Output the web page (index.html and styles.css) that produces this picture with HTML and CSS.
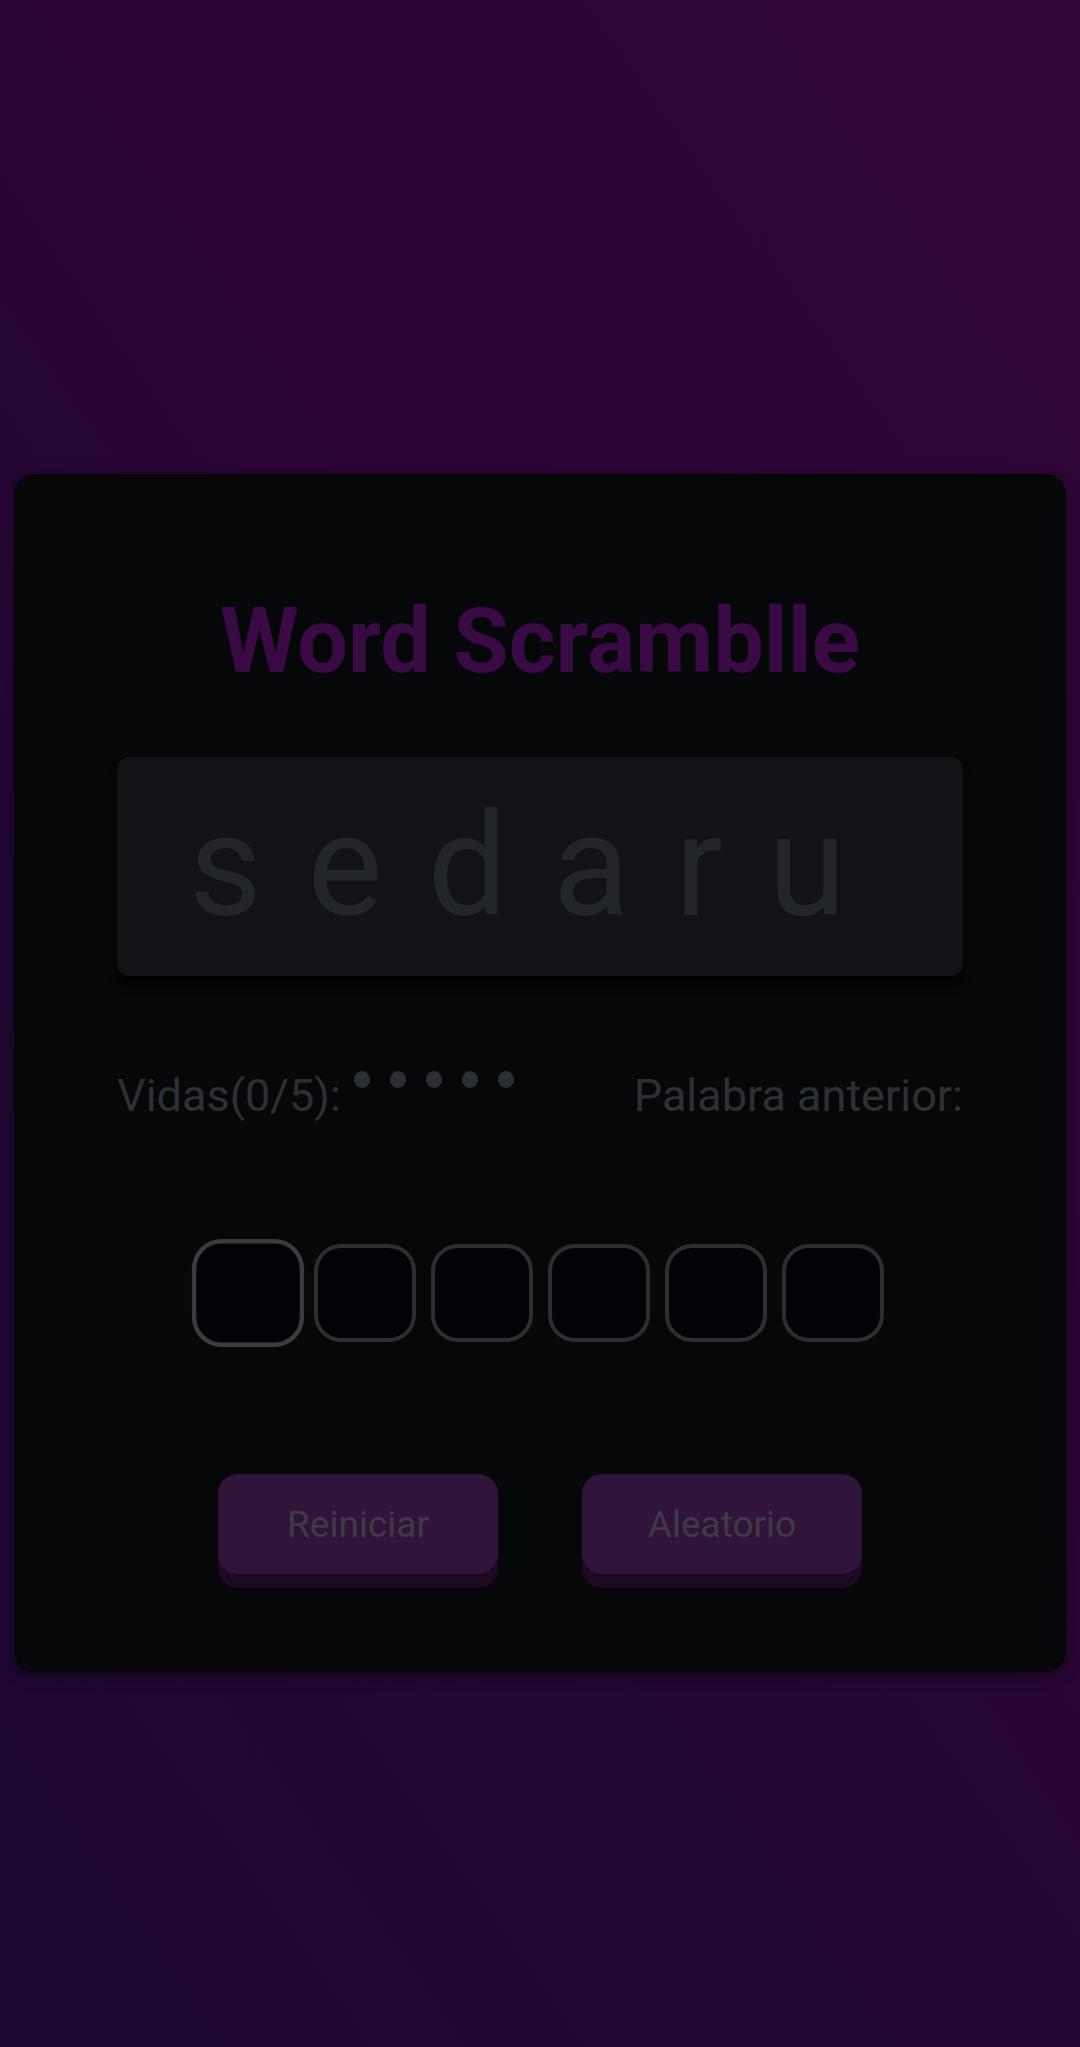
FILE: index.html
```html
<!DOCTYPE html>
<html lang="es">
<head>
<meta charset="utf-8">
<title>Word Scramblle</title>
<link rel="stylesheet" href="styles.css">
</head>
<body>
<main class="page">
  <section class="card">
    <h1 class="title">Word Scramblle</h1>
    <div class="word-box"><span class="word">sedaru</span></div>
    <div class="info-row">
      <div class="lives">
        <span class="label">Vidas(0/5):</span>
        <span class="dots"><i class="dot"></i><i class="dot"></i><i class="dot"></i><i class="dot"></i><i class="dot"></i></span>
      </div>
      <span class="label">Palabra anterior:</span>
    </div>
    <div class="inputs">
      <div class="cell cell-active"></div>
      <div class="cell"></div>
      <div class="cell"></div>
      <div class="cell"></div>
      <div class="cell"></div>
      <div class="cell"></div>
    </div>
    <div class="actions">
      <button class="btn">Reiniciar</button>
      <button class="btn">Aleatorio</button>
    </div>
  </section>
</main>
</body>
</html>
```
FILE: styles.css
```css
html, body {
  margin: 0;
  padding: 0;
}
body {
  width: 1080px;
  height: 2047px;
  overflow: hidden;
  font-family: Roboto, "Liberation Sans", sans-serif;
  background: linear-gradient(55deg, #1a0730 0%, #230632 38%, #2a0533 60%, #300636 100%);
}
.page {
  padding: 474px 14px 0;
}
.card {
  box-sizing: border-box;
  height: 1198px;
  background: #060709;
  border-radius: 20px;
  box-shadow: 0 4px 14px rgba(0, 0, 0, 0.35);
  padding: 114px 103px 0;
  display: flex;
  flex-direction: column;
  align-items: stretch;
}
.title {
  margin: 0;
  text-align: center;
  font-size: 90px;
  line-height: 108px;
  font-weight: 700;
  color: #3a0a44;
}
.word-box {
  margin-top: 61px;
  height: 219px;
  background: #111316;
  border-radius: 12px;
  box-shadow: 0 9px 10px rgba(0, 0, 0, 0.75);
  text-align: center;
}
.word {
  font-size: 142px;
  line-height: 219px;
  letter-spacing: 45px;
  color: #222629;
}
.info-row {
  margin-top: 94px;
  display: flex;
  justify-content: space-between;
  align-items: flex-start;
}
.lives {
  display: flex;
  align-items: flex-start;
}
.label {
  font-size: 45px;
  line-height: 52px;
  color: #2d3033;
}
.dots {
  display: flex;
  gap: 20px;
  margin-left: 13px;
  margin-top: 1px;
}
.dot {
  width: 16px;
  height: 17px;
  border-radius: 50%;
  background: #2b2e32;
}
.inputs {
  margin-top: 122px;
  display: flex;
  justify-content: center;
  gap: 15px;
}
.cell {
  box-sizing: border-box;
  width: 102px;
  height: 98px;
  border: 4px solid #2c2e31;
  border-radius: 27px;
  background: #030206;
}
.cell-active {
  border-color: #3a3c3f;
  transform: scale(1.1);
}
.actions {
  margin-top: 132px;
  display: flex;
  justify-content: center;
  gap: 84px;
}
.btn {
  width: 280px;
  height: 100px;
  border: none;
  border-radius: 20px;
  background: #30143a;
  box-shadow: 0 14px 0 #1e0923;
  font-family: Roboto, "Liberation Sans", sans-serif;
  font-size: 37px;
  color: #3e3a46;
  padding: 0;
}
```
